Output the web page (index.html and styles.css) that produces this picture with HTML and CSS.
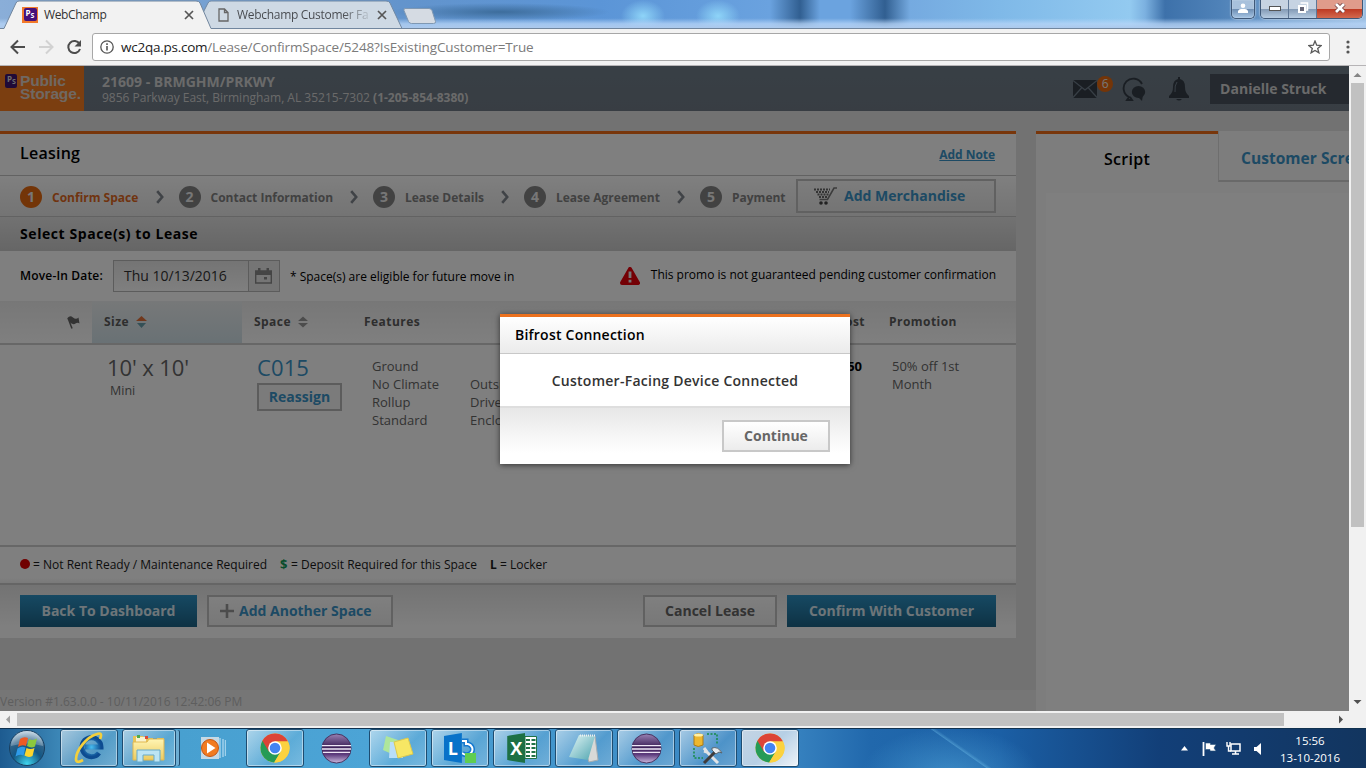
FILE: index.html
```html
<!DOCTYPE html>
<html lang="en">
<head>
<meta charset="utf-8">
<title>WebChamp</title>
<link rel="stylesheet" href="styles.css">
</head>
<body>
<svg width="0" height="0" class="defs">
  <defs>
    <linearGradient id="purple" x1="0" y1="0" x2="0" y2="1"><stop offset="0" stop-color="#9a83b4"/><stop offset=".45" stop-color="#3d2058"/><stop offset=".7" stop-color="#5c3a7c"/><stop offset="1" stop-color="#cdbbe0"/></linearGradient>
    <linearGradient id="yellow" x1="0" y1="0" x2="0" y2="1"><stop offset="0" stop-color="#fff5b4"/><stop offset="1" stop-color="#eccb60"/></linearGradient>
    <linearGradient id="note" x1="0" y1="0" x2="1" y2="1"><stop offset="0" stop-color="#e4f6f6"/><stop offset="1" stop-color="#4fa5b0"/></linearGradient>
    <radialGradient id="orb" cx=".5" cy=".95" r=".95"><stop offset="0" stop-color="#3fd5ee"/><stop offset=".45" stop-color="#135784"/><stop offset=".7" stop-color="#2f6288"/><stop offset="1" stop-color="#c4d8e6"/></radialGradient>
    <radialGradient id="ieblue"><stop offset="0" stop-color="#48bdf0"/><stop offset="1" stop-color="#0d4c91"/></radialGradient>
    <symbol id="chrome" viewBox="0 0 30 30"><circle cx="15" cy="15" r="14.5" fill="#f9cf3e"/><path d="M15 15 2.4 7.8A14.5 14.5 0 0 0 14.2 29.5L21 18.5z" fill="#259b57"/><path d="M15 8.2h12.8A14.5 14.5 0 0 1 14.2 29.5L21 18z" fill="#fbd23f"/><path d="M2.4 7.8A14.5 14.5 0 0 1 27.8 8.2H15L9 18.7z" fill="#dc4437"/><circle cx="15" cy="15" r="6.8" fill="#fff"/><circle cx="15" cy="15" r="5.3" fill="#4384f2"/></symbol>
    <symbol id="eclipse" viewBox="0 0 32 32"><circle cx="16" cy="16" r="15" fill="url(#purple)" stroke="#45305d"/><path d="M1 13h30M1 16.5h30M2 20h28" stroke="#efe7f6" stroke-width="1.4"/></symbol>
    <symbol id="close" viewBox="0 0 10 10"><path d="M1 1l8 8M9 1 1 9" stroke="#565656" stroke-width="1.7"/></symbol>
    <symbol id="chev" viewBox="0 0 8 14"><path d="M1.2 1.2 6.2 7l-5 5.8" fill="none" stroke="#80868e" stroke-width="2.6"/></symbol>
  </defs>
</svg>
<div class="screen">
  <header class="tabstrip">
    <svg class="tabshapes" width="440" height="29" viewBox="0 0 440 29">
      <path d="M195 28.500 208 3Q209 1 211 1H386Q389 1 390 3L402 28.500z" fill="#ced9e4" stroke="#7189a4"/>
      <path d="M405 8.500h24q2 0 3 2l3.500 11q.5 2-2 2h-22q-2 0-3-2l-4.500-11q-.5-2 1-2z" fill="#d5dbe3" stroke="#7f98b3"/>
      <path d="M0 28.500H4L16 3Q17 1 19 1H196Q199 1 200 3L211 28.500V30H0z" fill="#f2f2f2"/>
      <path d="M0 28.500H4L16 3Q17 1 19 1H196Q199 1 200 3L211 28.500H440" fill="none" stroke="#71869e"/>
    </svg>
    <div class="tab first"><span class="favicon"><b>P<i>S</i></b></span><span class="tabname">WebChamp</span><svg class="x" width="10" height="10"><use href="#close"/></svg></div>
    <div class="tab second"><svg width="11" height="14" viewBox="0 0 11 14"><path d="M1 1h5.500L10 4.500V13H1zM6.500 1v3.500H10" fill="none" stroke="#666" stroke-width="1.300"/></svg><span class="tabname fade">Webchamp Customer Fa</span><svg class="x" width="10" height="10"><use href="#close"/></svg></div>
    <div class="winbtns">
      <span class="user"><svg width="10" height="10" viewBox="0 0 10 10"><circle cx="5" cy="2.800" r="2.300" fill="#fff"/><path d="M0 10V8q1-2 3-2h4q2 0 3 2v2z" fill="#fff"/></svg></span>
      <span class="group"><span class="wb"><svg width="12" height="5"><rect x=".5" y=".5" width="11" height="4" fill="#fff" stroke="#555"/></svg></span><span class="wb"><svg width="12" height="12" viewBox="0 0 12 12"><path d="M3.500 1h7v7h-2" fill="none" stroke="#fff" stroke-width="1.500"/><path d="M2 4h6v6H2z" fill="#667" stroke="#fff" stroke-width="2"/></svg></span><span class="wb red"><svg width="12" height="10" viewBox="0 0 12 10"><path d="M2 1l8 8M10 1 2 9" stroke="#633" stroke-width="4.200"/><path d="M2 1l8 8M10 1 2 9" stroke="#fff" stroke-width="2.800"/></svg></span></span>
    </div>
  </header>
  <div class="toolbar">
    <svg width="84" height="24" viewBox="0 0 84 24"><g fill="none" stroke="#4c4c4c" stroke-width="2"><path d="M25 12H12M18 5.500 11.500 12l6.500 6.500"/><path d="M39 12h13M46 5.500 52.500 12 46 18.500" stroke="#d2d2d2"/><path d="M79.500 9A6 6 0 1 0 80 14"/></g><path d="M81 5v6.500h-6.500z" fill="#4c4c4c"/></svg>
    <div class="omnibox"><svg width="14" height="14" viewBox="0 0 14 14"><circle cx="7" cy="7" r="6.200" fill="none" stroke="#555" stroke-width="1.300"/><path d="M7 6v4.500M7 3.300v1.600" stroke="#555" stroke-width="1.600"/></svg><span class="url"><b>wc2qa.ps.com</b>/Lease/ConfirmSpace/5248?IsExistingCustomer=True</span><svg class="star" width="14" height="14" viewBox="0 0 14 14"><path d="M7 1 8.700 5.200l4.500.3-3.500 2.900 1.200 4.400L7 10.400l-3.900 2.400 1.200-4.400L.8 5.500l4.500-.3z" fill="none" stroke="#5a5a5a" stroke-width="1.300"/></svg></div>
    <svg class="menu" width="4" height="14"><g fill="#555"><circle cx="2" cy="2" r="1.600"/><circle cx="2" cy="7" r="1.600"/><circle cx="2" cy="12" r="1.600"/></g></svg>
  </div>
  <div class="middle">
    <div class="page">
      <div class="masthead">
        <div class="logo"><span class="mark"><b>P<i>S</i></b></span><span class="brand"><span>Public</span><span>Storage.</span></span></div>
        <div class="store"><b class="storename">21609 - BRMGHM/PRKWY</b><span class="addr">9856 Parkway East, Birmingham, AL 35215-7302 <b>(1-205-854-8380)</b></span></div>
        <div class="mail"><svg width="24" height="18" viewBox="0 0 24 18"><path d="M0 0h24v18H0z" fill="#343d47"/><path d="M0 .5 12 10 24 .5M0 17.500 8.500 8M24 17.500 15.500 8" fill="none" stroke="#707e8c" stroke-width="1.200"/></svg><span class="count">6</span></div>
        <svg class="chat" width="25" height="25" viewBox="0 0 25 25"><path d="M21 7A9.700 9.700 0 1 0 8 20l-2 3h5l-2-3" fill="none" stroke="#343d47" stroke-width="1.900"/><ellipse cx="17.500" cy="15" rx="6.700" ry="6" fill="#343d47"/><path d="M16 19l5 5 1-6z" fill="#343d47"/></svg>
        <svg class="bell" width="20" height="24" viewBox="0 0 20 24"><path d="M9 2V0h2v2q5 1 5 8 0 6 4 9v2H0v-2q4-3 4-9 0-7 5-8zM7 22h6q-3 3-6 0z" fill="#343d47"/><path d="M8 5Q5.500 8 6 15" fill="none" stroke="#707e8c"/></svg>
        <div class="person">Danielle Struck</div>
      </div>
      <div class="columns">
        <main class="lease">
          <div class="titlebar"><h1>Leasing</h1><a>Add Note</a></div>
          <div class="steps">
            <span class="num on">1</span><span class="step s1">Confirm Space</span><svg class="cv" width="8" height="14"><use href="#chev"/></svg>
            <span class="num">2</span><span class="step s2">Contact Information</span><svg class="cv" width="8" height="14"><use href="#chev"/></svg>
            <span class="num">3</span><span class="step s3">Lease Details</span><svg class="cv" width="8" height="14"><use href="#chev"/></svg>
            <span class="num">4</span><span class="step s4">Lease Agreement</span><svg class="cv" width="8" height="14"><use href="#chev"/></svg>
            <span class="num">5</span><span class="step s5">Payment</span>
            <span class="merch"><svg width="25" height="18" viewBox="0 0 25 18"><path d="M1 2.500h16M3 5h13M4.500 7.500h11M6 10h8" stroke="#666" stroke-width="1.800" stroke-dasharray="2 1"/><path d="M24 1h-3l-6.500 11.500H6.500" fill="none" stroke="#777" stroke-width="1.600"/><circle cx="8" cy="16" r="1.800" fill="#444"/><circle cx="13" cy="16" r="1.800" fill="#444"/></svg><span>Add Merchandise</span></span>
          </div>
          <h2>Select Space(s) to Lease</h2>
          <div class="movein"><b>Move-In Date:</b><span class="date"><span class="dval">Thu 10/13/2016</span><span class="cal"><svg width="17" height="16" viewBox="0 0 17 16"><path d="M.7 3h15.600v12H.7z" fill="none" stroke="#8a8a8a" stroke-width="1.400"/><path d="M1 3h15v4H1zM3 0h2.500v5H3zM11.500 0H14v5h-2.500zM9 9h3v2.500H9z" fill="#8a8a8a"/></svg></span></span><span class="future">* Space(s) are eligible for future move in</span><svg class="warn" width="20" height="18" viewBox="0 0 20 18"><path d="M10 2 18 16H2z" fill="#e8000b" stroke="#e8000b" stroke-width="4" stroke-linejoin="round"/><path d="M10 4.500v6.500M10 12.800v2.700" stroke="#eee" stroke-width="2.800"/></svg><span class="promo">This promo is not guaranteed pending customer confirmation</span></div>
          <div class="thead">
            <span class="flag"><svg width="13" height="13" viewBox="0 0 13 13"><path d="M1 2 5 12.500" stroke="#666" stroke-width="1.500"/><path d="M.5 2Q3-1 6 1.500t5.500 0l1 6q-2-1.500-4 0t-5-.5z" fill="#666"/></svg></span>
            <span class="sized"><span>Size</span><svg width="11" height="12" viewBox="0 0 11 12"><path d="M5.500 0 11 5H0z" fill="#e27139"/><path d="M5.500 12 10 7H1z" fill="#69a0ad"/></svg></span>
            <span class="spaced"><span>Space</span><svg width="10" height="12" viewBox="0 0 11 12"><path d="M5.500 0 11 5H0zM5.500 12 11 7H0z" fill="#999"/></svg></span>
            <span class="feat">Features</span><span class="costh">Cost</span><span class="promoh">Promotion</span>
          </div>
          <div class="trow">
            <div class="size"><span class="big">10' x 10'</span><small>Mini</small></div>
            <div class="space"><span class="big blue">C015</span><span class="reassign">Reassign</span></div>
            <div class="f1">Ground<br>No Climate<br>Rollup<br>Standard</div>
            <div class="f2"><br>Outside<br>Drive-up<br>Enclosed</div>
            <div class="cost">$42.50</div>
            <div class="offer">50% off 1st<br>Month</div>
          </div>
          <div class="legend"><i class="dot"></i><span class="l1">= Not Rent Ready / Maintenance Required</span><b class="dollar">$</b><span class="l2">= Deposit Required for this Space</span><b class="el">L</b><span class="l3">= Locker</span></div>
          <div class="actions"><span class="btn primary back">Back To Dashboard</span><span class="btn add"><svg width="14" height="14"><path d="M7 0v14M0 7h14" stroke="#999" stroke-width="2.600"/></svg><span>Add Another Space</span></span><span class="btn cancel">Cancel Lease</span><span class="btn primary confirm">Confirm With Customer</span></div>
          <div class="version"><span>Version #1.63.0.0 - 10/11/2016 12:42:06 PM</span></div>
        </main>
        <aside class="side"><div class="sidetabs"><span class="active">Script</span><span class="other">Customer Screen</span></div><div class="sidebody"></div></aside>
      </div>
      <div class="overlay">
        <div class="modal">
          <div class="mhead">Bifrost Connection</div>
          <div class="mbody"><span>Customer-Facing Device Connected</span></div>
          <div class="mfoot"><span class="continue">Continue</span></div>
        </div>
      </div>
    </div>
    <div class="vscroll"><svg width="17" height="17"><path d="M4.500 11h8l-4-4z" fill="#858585"/></svg><span class="vthumb"></span><svg class="down" width="17" height="17"><path d="M4.500 6h8l-4 4z" fill="#505050"/></svg></div>
  </div>
  <div class="hscroll"><svg width="17" height="17"><path d="M10 4.500v8l-4-4z" fill="#a0a0a0"/></svg><span class="hthumb"></span><svg class="right" width="17" height="17"><path d="M7 4.500v8l4-4z" fill="#505050"/></svg></div>
  <footer class="taskbar">
    <div class="start"><svg width="38" height="38" viewBox="0 0 38 38"><circle cx="19" cy="19" r="17.500" fill="url(#orb)" stroke="#183f60"/><path d="M3 17a16 15 0 0 1 32 0q-16-5-32 0z" fill="#fff" opacity=".25"/><g transform="translate(1 -1)"><path d="M11 11q4-3 8-1l-2 8q-4-2-8 1z" fill="#ee5a24"/><path d="M20 11q4 2 8-.5l-2 8q-4 2-8-.5z" fill="#8cc83d"/><path d="M8.500 20.500q4-3 8-1l-2 8q-4-2-8 1z" fill="#2f9be8"/><path d="M17.500 20q4 2 8 0l-2 8q-4 2-8-.5z" fill="#fcd52d"/></g></svg></div>
    <div class="tbtn open"><svg width="30" height="32" viewBox="0 0 30 32"><path d="M25 21A9.500 9.500 0 1 1 27 15H11" fill="none" stroke="url(#ieblue)" stroke-width="5"/><path d="M26 7Q29 0 23 2C12 5 2 19 2 27q0 5 7 1" fill="none" stroke="#f3cf3c" stroke-width="2.700"/></svg></div>
    <div class="tbtn open stack"><svg width="34" height="30" viewBox="0 0 34 30"><path d="M1 6V3h10l2 2h19v22H1z" fill="#e6c45b"/><path d="M4 4h10v5H4z" fill="#f9f3ce"/><path d="M5 2h3v3H5z" fill="#4da84a"/><path d="M13 3h3v3h-3z" fill="#dd4a38"/><path d="M21 5h4v3h-4z" fill="#3b92d8"/><path d="M1 9h14l2-3h15v21H1z" fill="url(#yellow)" stroke="#e0b750"/><path d="M5 29V17h23v12h-6v-7H11v7z" fill="#bce4f4" stroke="#66aacb"/></svg></div>
    <div class="tbtn"><svg width="26" height="24" viewBox="0 0 26 24"><path d="M1 1h18v22H1z" fill="#c4d9e6"/><path d="M20 2v20M23 3v18M25.500 4v16" stroke="#a0d1eb" stroke-width="1.500"/><circle cx="10" cy="12" r="8.500" fill="#f17b21" stroke="#c55614"/><path d="M7 6.500 15.500 12 7 17.500z" fill="#fff"/></svg></div>
    <div class="tbtn open"><svg width="30" height="30"><use href="#chrome"/></svg></div>
    <div class="tbtn"><svg width="31" height="31"><use href="#eclipse"/></svg></div>
    <div class="tbtn open"><svg width="32" height="26" viewBox="0 0 32 26"><path d="M4 1 16 5 12 20 1 15z" fill="#aee69b"/><path d="M8 7h13v16H7z" fill="#b9def8"/><path d="M12 7 26 3l5 16-15 4z" fill="#f7e764" stroke="#dcc94d"/></svg></div>
    <div class="tbtn open"><div class="app lync"><span class="letter">L</span><svg width="15" height="30" viewBox="0 0 15 30"><path d="M0 8h4v3h2a6 5.500 0 1 1-6 9" fill="none" stroke="#1579cf" stroke-width="5"/><path d="M0 8h4v3h2a6 5.500 0 1 1-6 9" fill="none" stroke="#fff" stroke-width="2"/><path d="M3 20h11v10H3z" fill="#5fcd50"/></svg></div></div>
    <div class="tbtn open"><div class="app excel"><span class="letter">X</span><svg width="12" height="24" viewBox="0 0 12 24"><path d="M0 .5h11.500v22H0z" fill="#fff" stroke="#217346"/><path d="M1 4h4M6.500 4h4M1 8h4M6.500 8h4M1 12h4M6.500 12h4M1 16h4M6.500 16h4M1 20h4M6.500 20h4" stroke="#217346" stroke-width="2"/></svg></div></div>
    <div class="tbtn open"><svg width="32" height="30" viewBox="0 0 32 30"><path d="M12 3h15l3 24-9 2z" fill="#d8d9d7" stroke="#a7adb0"/><path d="M11 2 27 3 20 27 1 24z" fill="url(#note)"/><path d="M12 2.500h15" stroke="#edf2f4" stroke-width="2" stroke-dasharray="1 1"/></svg></div>
    <div class="tbtn open"><svg width="31" height="31"><use href="#eclipse"/></svg></div>
    <div class="tbtn open"><svg width="32" height="32" viewBox="0 0 32 32"><path d="M2 3q4-3 9 0v10q-5 3-9 0z" fill="#edb72f" stroke="#a97b1b"/><ellipse cx="6.500" cy="3" rx="4.500" ry="1.500" fill="#fff0a7"/><path d="M15 2h10v11M2 16v10h9" fill="none" stroke="#168b48" stroke-width="1.500" stroke-dasharray="2 1.500"/><path d="M12 16l3 4 11 11M15 20l-3-1" stroke="#e0e3e6" stroke-width="3"/><path d="M12 31 25 18" stroke="#403c3b" stroke-width="3"/><path d="M20 16q6-2 10 5l-3-1-3 2-4-4z" fill="#e6eaee" stroke="#59656e"/></svg></div>
    <div class="tbtn open current"><svg width="30" height="30"><use href="#chrome"/></svg></div>
    <div class="tray"><svg width="8" height="5"><path d="M0 4.500h7L3.500 0z" fill="#fff"/></svg><svg width="15" height="16" viewBox="0 0 15 16"><path d="M1.500 1v14" stroke="#fff" stroke-width="1.800"/><path d="M3.500 2h5v1.500H14L12 7l2 3H8V8.500H3.500z" fill="#fff" stroke="#26517a" stroke-width=".6"/></svg><svg width="16" height="15" viewBox="0 0 16 15"><path d="M5 3h9v7H5zM6 13h7M9.500 10v3" fill="none" stroke="#fff" stroke-width="1.500"/><path d="M1 1v4h3V1M2.500 5v5H5" fill="none" stroke="#fff" stroke-width="1.400"/></svg><svg width="8" height="14" viewBox="0 0 8 14"><path d="M0 5h2.500L7 1v12L2.500 9H0z" fill="#fff"/></svg></div>
    <div class="clock"><span>15:56</span><span>13-10-2016</span></div>
    <div class="peek"></div>
  </footer>
</div>
</body>
</html>
```
FILE: styles.css
```css
*{box-sizing:border-box}
body{margin:0;font-family:"Open Sans","Noto Sans",sans-serif;font-size:12px;color:#000}
.defs{position:absolute}
svg{display:block;flex:none}
.screen{width:1366px;height:768px;overflow:hidden;display:flex;flex-direction:column}
.screen span,.screen b,.screen a{white-space:nowrap}
.tabstrip{height:29px;flex:none;display:flex;position:relative;border-bottom:1px solid #71869e;
 background:linear-gradient(180deg,transparent 65%,rgba(185,214,248,.75) 85%,#acc9ec),
 radial-gradient(ellipse 22px 16px at 643px 16px,#8ed4f8,transparent),
 radial-gradient(ellipse 22px 16px at 718px 16px,#8ed4f8,transparent),
 radial-gradient(ellipse 110px 9px at 500px 12px,#3d6d9c,transparent),
 linear-gradient(90deg,#8aaed8 0,#6394cc 400px,#5b95d7 600px,#6aa2df 770px,#315f91 800px,#6ba3df 820px,#6ba3df 850px,#315f91 885px,#75aae0 910px,#7fb9e8 1000px,#93caf0 1130px,#7cb1e0 1145px,#3d71aa 1165px,#4f82b8 1220px,#9abde0 1366px)}
.tabshapes{position:absolute;left:0;top:0}
.tab{position:relative;display:flex;align-items:center;height:29px}
.first{width:204px;padding-left:22px}
.second{width:200px;padding-left:14px}
.favicon{width:16px;height:16px;background:#f37a2b;padding:1.500px;flex:none}
.favicon b,.mark b{display:block;width:13px;height:13px;background:#45117a;color:#fff;font-size:8px;line-height:9px;border-radius:2px;padding-left:2px;position:relative}
.favicon i,.mark i{font-style:normal;position:absolute;left:7px;top:3px;font-size:7px}
.tabname{font-size:12px;color:#333;margin-left:6px;line-height:18px;letter-spacing:-.35px}
.first .x{margin-left:auto;margin-right:10px}
.second .tabname{margin-left:8px;width:134px;overflow:hidden;letter-spacing:-.3px}
.fade{background:linear-gradient(90deg,#45484d 105px,#c2ccd6 134px);background-clip:text;-webkit-background-clip:text;color:transparent}
.second .x{margin-left:6px}
.winbtns{position:relative;margin-left:auto;display:flex;gap:5px;padding-right:3px}
.user,.group{height:19px;border:1px solid #3f5878;border-top:0;border-radius:0 0 5px 5px;display:flex;overflow:hidden;box-shadow:inset 0 0 1px #fff,0 0 2px #fff}
.user{width:24px;align-items:center;justify-content:center;padding-bottom:3px;background:linear-gradient(#a8c1dc 50%,#6c8cb1 50%,#a7c6e6)}
.group{width:103px}
.wb{width:28px;display:flex;align-items:center;justify-content:center;padding-bottom:2px;border-right:1px solid #5f7897;background:linear-gradient(#c6d3e2 50%,#8299b4 50%,#b7cce2)}
.wb.red{flex:1;border:0;background:linear-gradient(#e09c8b 50%,#bd3922 50%,#d3694e)}
.toolbar{height:37px;flex:none;background:#f2f2f2;border-bottom:1px solid #b6b4b6;display:flex;align-items:center;padding-bottom:1px}
.omnibox{margin-left:8px;width:1238px;height:28px;border:1px solid #a7a7a7;border-radius:3px;background:#fff;display:flex;align-items:center;padding:0 7px}
.url{margin-left:7px;font-size:13.500px;color:#7b7b7b;letter-spacing:-.13px}
.url b{font-weight:400;color:#222;letter-spacing:-.25px}
.star{margin-left:auto}
.menu{margin-left:16px}
.middle{height:645px;flex:none;display:flex}
.page{width:1349px;flex:none;height:645px;background:#e5e5e5;position:relative;overflow:hidden}
.masthead{height:45px;background:linear-gradient(#707f8b,#717b87);display:flex;align-items:center;color:#d5d5d5}
.logo{width:84px;height:45px;background:#f67d20;display:flex;color:#e0d0c4;padding:8px 0 0 5px;flex:none}
.mark b{width:12px;height:14px;background:#41156e;color:#ddd}
.brand{font:bold 15.500px/13px "Liberation Sans",sans-serif;margin-left:3px;letter-spacing:-.15px;display:flex;flex-direction:column}
.store{margin-left:18px;width:972px;display:flex;flex-direction:column}
.storename{font-size:14px;line-height:17px}
.addr{font-size:12px;line-height:15px}
.mail{width:48px;display:flex}
.count{width:16px;height:16px;border-radius:50%;background:#e86a10;margin:-4px 0 0;font-size:12px;line-height:16px;text-align:center;color:#eee}
.chat{margin-top:1px}
.bell{margin-left:23px}
.person{margin-left:21px;width:139px;height:30px;background:#4a535e;font-weight:700;font-size:14px;line-height:30px;padding-left:10px}
.columns{display:flex;padding-top:20px}
.lease{width:1036px;flex:none}
.lease>*{width:1016px}
.titlebar{height:45px;border-top:3px solid #f06d16;border-bottom:1px solid #c5c5c5;background:#fff;display:flex;justify-content:space-between;align-items:center;padding:0 21px 4px 20px}
h1{font-size:16px;font-weight:600;margin:0;letter-spacing:.25px}
.titlebar a{font-weight:700;font-size:12px;color:#3a94c8;text-decoration:underline;margin-top:3px;letter-spacing:-.05px}
.steps{height:41px;background:linear-gradient(#fff,#e8e8e8);border-bottom:1px solid #c5c5c5;display:flex;align-items:center;padding:1px 0 0 20px;font-weight:700;font-size:12px;color:#838383}
.num{width:22px;height:22px;border-radius:50%;background:#858585;color:#eee;font-size:14px;line-height:22px;text-align:center;flex:none}
.num.on{background:#e66a10}
.step{margin-left:10px;padding-top:1px}
.s1{width:103.500px;color:#e1691f}.s2{width:139.500px}.s3{width:96px}.s4{width:121px}.s5{width:64px}
.cv{width:8px;margin-right:15px}
.merch{width:200px;height:34px;border:2px solid #c3c3c3;background:linear-gradient(#fafafa,#e9e9e9);display:flex;align-items:center;gap:6px;padding-left:15px;margin-top:-2px;font-size:14px;color:#3a94c8}
h2{margin:0;height:34px;background:linear-gradient(#e4e4e4,#cccccc);padding-left:20px;font-size:14px;letter-spacing:.58px;line-height:33px;font-size:14px}
.movein{height:50px;background:#fff;display:flex;align-items:center;padding:0 20px}
.movein b{width:93px;font-weight:600;letter-spacing:.17px;margin-top:-2px}
.date{width:167px;height:32px;border:1px solid #b8b8b8;background:linear-gradient(#e9e9e9,#fff);display:flex}
.dval{width:135px;border-right:1px solid #b8b8b8;padding-left:10px;font-size:14px;line-height:29px;color:#333}
.cal{flex:1;display:flex;align-items:center;justify-content:center;background:#ebebeb}
.future{margin-left:10px;width:330px}
.warn{flex:none}
.promo{margin-left:11px;margin-top:-4px}
.thead{height:44px;background:linear-gradient(#efefef,#fff);border-bottom:2px solid #cfcfcf;display:grid;grid-template-columns:92px 150px 112px 446px 65px 151px;font-weight:700;color:#5c5c5c;line-height:42px;font-size:12px;letter-spacing:.45px}
.flag{padding:15px 0 0 67px}
.sized,.spaced{display:flex;align-items:center;gap:7px;padding-left:12px}
.sized{background:linear-gradient(#eef1f2,#d3e3ea)}
.feat{padding-left:10px}.costh{text-align:right}.promoh{padding-left:24px}
.trow{height:202px;background:#fff;border-bottom:2px solid #cfcfcf;display:grid;grid-template-columns:150px 115px 98px 392px 1fr;color:#666;font-size:13px;line-height:18px;padding:12px 0 0 107px}
.trow{grid-template-columns:150px 115px 98px 306px 86px 1fr}
.big{display:block;font-size:22px;line-height:21px;letter-spacing:-.1px}
.space .big{letter-spacing:.1px}
.blue{color:#3a94c8}
.size small{display:block;font-size:12.500px;margin:4px 0 0 3px}
.reassign{display:block;margin-top:5px;width:85px;height:28px;border:2px solid #b9b9b9;background:#f7f7f7;color:#3a94c8;font-weight:700;font-size:14px;line-height:24px;text-align:center}
.cost{text-align:right;font-weight:700;color:#000}
.offer{padding-left:30px}
.legend{height:38px;background:linear-gradient(#fff 85%,#f4f4f4);border-bottom:2px solid #cbcbcb;display:flex;align-items:center;padding:0 0 2px 20px;color:#1a1a1a}
.dot{width:10px;height:10px;background:#e00000;border-radius:50%;margin-right:3px}
.l1{width:247px}.dollar{color:#119b58;width:11px;font-size:13px}.l2{width:199px}.el{width:10px}
.actions{height:53px;background:linear-gradient(#e6e6e6,#fff 80%);display:flex;align-items:flex-start;padding:10px 20px}
.btn{height:32px;border:2px solid #c3c3c3;background:linear-gradient(#fff,#f0f0f0);font-weight:700;font-size:14px;line-height:28px;text-align:center;color:#666}
.primary{border:0;line-height:32px;color:#dcebf3;background:linear-gradient(#2e93c6,#1c6488)}
.back{width:177px}.add{width:186px;margin-left:10px;display:flex;align-items:center;padding-left:11px;gap:5px;color:#3a94c8}
.cancel{width:134px;margin-left:250px}.confirm{width:209px;margin-left:10px}
.lease .version{width:1036px;margin-top:52px;height:21px;background:#ececec;color:#bdbdbd;line-height:23px}
.side{width:313px;height:580px;background:#fafafa;overflow:hidden}
.sidetabs{display:flex;height:51px}
.active{width:182px;border-top:3px solid #f06d16;text-align:center;font-size:16px;font-weight:600;letter-spacing:.3px;line-height:50px;flex:none}
.other{border-left:1px solid #ddd;border-bottom:2px solid #d3d3d3;width:180px;padding-left:22px;font-size:15.500px;font-weight:700;line-height:55px;color:#3a94c8;flex:none;letter-spacing:.05px}
.sidebody{margin:11px 0 0 10px;height:530px;background:#fff}
.overlay{position:absolute;inset:0;background:rgba(0,0,0,.5);display:flex;align-items:flex-start;padding:248px 0 0 500px}
.modal{width:350px;height:150px;background:#fff;border-top:3px solid #ec711e;box-shadow:0 1px 6px rgba(0,0,0,.6)}
.mhead{height:37px;border-bottom:1px solid #c8c8c8;background:linear-gradient(#fff,#ebebeb);font-size:14px;font-weight:600;line-height:35px;padding-left:15px;letter-spacing:.22px}
.mbody{height:54px;border-bottom:2px solid #dedede;text-align:center;font-size:14px;font-weight:600;line-height:54px;color:#333;letter-spacing:.26px}
.mfoot{height:56px;background:linear-gradient(#e7e7e7,#fff 80%);padding:12px 20px 0 222px}
.continue{display:block;height:32px;border:2px solid #c8c8c8;background:linear-gradient(#fff,#ececec);text-align:center;line-height:28px;font-size:14px;font-weight:700;color:#666}
.vscroll{width:17px;background:#f1f1f1;display:flex;flex-direction:column}
.vthumb{height:444px;width:13px;margin-left:2px;background:#c1c1c1}
.down{margin-top:auto}
.hscroll{height:17px;flex:none;background:#f1f1f1;display:flex;align-items:center}
.hthumb{width:1267px;height:13px;background:#c1c1c1}
.right{margin-left:auto;margin-right:17px}
.taskbar{height:40px;flex:none;border-top:1px solid #10314f;display:flex;background:linear-gradient(35deg,transparent 49.400%,rgba(120,200,240,.35) 50%,transparent 52%) 860px 0/200px 40px no-repeat,radial-gradient(ellipse 90px 50px at 950px 48px,rgba(100,190,235,.45),transparent),linear-gradient(90deg,#1d5b90 0,#3c87b7 60px,#48a0d0 180px,#4ca4d6 370px,#3580be 800px,#2168ac 870px,#1b5fa5 1000px,#123f78 1160px,#12355f 1366px)}
.start{width:60px;flex:none;padding-left:8px}
.tbtn{width:58px;margin-right:3.900px;height:38px;flex:none;display:flex;align-items:center;justify-content:center}
.open{border:1px solid #1e4c70;border-radius:3px;background:linear-gradient(135deg,rgba(255,255,255,.55),rgba(255,255,255,.1) 60%,rgba(255,255,255,.25));box-shadow:inset 0 0 0 1px rgba(255,255,255,.45)}
.stack{width:54px;margin-right:7.900px;box-shadow:inset 0 0 0 1px rgba(255,255,255,.45),4px 0 0 -1px #6daed3,5px 0 0 -1px #1e4c70}
.current{background:linear-gradient(135deg,#c5d5e4,#b6cfe5 50%,#eef3f8)}
.app{display:flex;align-items:center}
.letter{width:18px;height:30px;color:#fff;font-size:18px;font-weight:700;line-height:30px;text-align:center;clip-path:polygon(0 10%,100% 0,100% 100%,0 90%)}
.lync .letter{background:#0872c9}.excel .letter{background:#1d7044}
.tray{margin-left:auto;display:flex;align-items:center;gap:13px}
.tray svg:nth-child(3){margin-left:-4px}
.tray svg:nth-child(4){margin-left:-1px}
.clock{margin-left:18px;width:60px;color:#fff;font-size:11.500px;line-height:17px;text-align:center;display:flex;flex-direction:column;padding-top:3px}
.peek{width:13px;margin-left:13px}
```
